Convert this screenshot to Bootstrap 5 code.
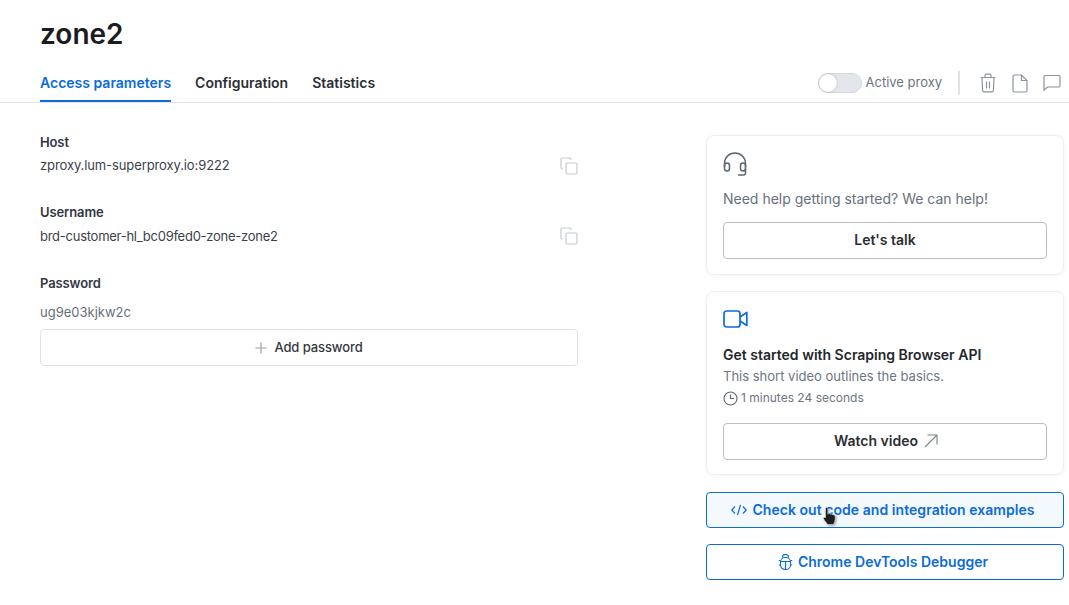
<!DOCTYPE html>
<html lang="en">
<head>
<meta charset="utf-8">
<title>zone2</title>
<link href="https://cdn.jsdelivr.net/npm/bootstrap@5.3.0/dist/css/bootstrap.min.css" rel="stylesheet">
<style>
html,body{height:605px;overflow:hidden}
body{font-family:Inter,"Liberation Sans",sans-serif;background:#fff;color:#24272b;font-size:14px}
.zhead{padding:14px 5px 0 40px}
.ztitle{font-size:28px;font-weight:600;line-height:40px;margin:0;color:#1a1c1f}
.ztabs{height:49px;border-bottom:1px solid #e1e4e8;padding:0 8px 0 40px}
.ztabbar{gap:24px}
.ztab{display:block;height:48px;line-height:58px;font-size:14px;font-weight:600;color:#2b2f35;text-decoration:none}
.ztab-on{color:#0b6bdc;border-bottom:2px solid #0b6bdc}
.ztools{height:40px;margin-top:9px}
.zswitch{width:44px;height:20px;border-radius:10px;background:#e3e6ea;border:1px solid #d5d9de;position:relative;margin-right:4px}
.zknob{position:absolute;left:0;top:0;width:18px;height:18px;border-radius:50%;background:#fff;box-shadow:0 0 2px rgba(0,0,0,.3)}
.zactive{font-size:13px;color:#6c7683;letter-spacing:-.02px}
.zsep{width:2px;height:24px;background:#dfe2e6;margin:0 19px 0 16px}
.zico{color:#8c949e;display:block}
.zico2{margin-left:15px}
.zico3{margin-left:15px}
.zmain{padding:0 5px 0 40px}
.zleft{width:538px;padding-top:31px}
.zright{width:358px;margin-left:128px;padding-top:32px}
.zlabel{font-size:13px;font-weight:600;line-height:16px;color:#33383f;letter-spacing:-.12px}
.zval{font-size:13px;line-height:20px;color:#3b414a}
.zfield1{height:70px}
.zfield2{height:71px}
.zfield1 .zval{margin-top:5px;letter-spacing:-.1px}
.zfield2 .zval{margin-top:6px;letter-spacing:-.26px}
.zcopy{color:#c5cad0;margin-top:7px}
.zpass{color:#67707c;margin-top:11px}
.zadd{width:100%;height:37px;margin-top:7px;background:#fff;border:1px solid #dfe2e6;border-radius:4px;font-size:13px;font-weight:500;color:#33383f;letter-spacing:-.1px;padding:0;display:flex;align-items:center;justify-content:center;gap:7px}
.zcard{background:#fff;border:1px solid #eceef1;border-radius:8px;box-shadow:0 1px 4px rgba(30,40,60,.05);padding:16px;margin-bottom:16px}
.zhelp{height:140px}
.zvideo{height:184px;padding-top:18px;margin-bottom:17px}
.zhelptext{font-size:14px;line-height:20px;margin-top:12px;color:#67707c}
.zbtn{width:100%;height:37px;background:#fff;border:1px solid #b9bec6;border-radius:4px;font-size:14px;font-weight:600;color:#2b2f35;padding:0 0 2px;display:flex;align-items:center;justify-content:center;gap:6px;margin-top:13px}
.zbtn2{margin-top:15px;padding-left:2px}
.zcardtitle{font-size:14px;font-weight:600;line-height:20px;color:#24272b;margin-top:17px}
.zsmall{font-size:13px;line-height:20px;color:#6c7683;margin-top:1px}
.zsmall2{font-size:12px;line-height:20px;color:#6c7683;margin-top:2px;gap:3px}
.zblue{width:100%;height:36px;background:#fff;border:1px solid #0b6bdc;border-radius:4px;font-size:14px;font-weight:600;color:#0b6bdc;padding:0 4px 1px 0;display:flex;align-items:center;justify-content:center;gap:5px;margin-bottom:16px}
.zhover{background:#f4f9fe;letter-spacing:.05px}
.zanchor{position:relative}
.zcursor{position:absolute;left:116px;top:15px;filter:drop-shadow(1px 1px 1px rgba(0,0,0,.35))}
</style>
</head>
<body>
<div class="zhead">
  <h1 class="ztitle">zone2</h1>
</div>
<div class="ztabs d-flex justify-content-between align-items-start">
  <nav class="d-flex ztabbar">
    <a class="ztab ztab-on" href="#">Access parameters</a>
    <a class="ztab" href="#">Configuration</a>
    <a class="ztab" href="#">Statistics</a>
  </nav>
  <div class="ztools d-flex align-items-center">
    <span class="zswitch"><span class="zknob"></span></span>
    <span class="zactive">Active proxy</span>
    <span class="zsep"></span>
    <svg class="zico" width="18" height="20" viewBox="0 0 18 20" fill="none" stroke="currentColor" stroke-width="1.2"><path d="M1.500 4.500h15M3 4.500l.6 13a1.500 1.500 0 0 0 1.500 1.400h7.800a1.500 1.500 0 0 0 1.500-1.400l.6-13M6 4.500V2.600A1.400 1.400 0 0 1 7.400 1.200h3.200A1.400 1.400 0 0 1 12 2.600v1.900M7.500 8.500v7M10.500 8.500v7"/></svg>
    <svg class="zico zico2" width="16" height="19" viewBox="0 0 16 19" fill="none" stroke="currentColor" stroke-width="1.2"><path d="M9.500 1H2.400A1.400 1.400 0 0 0 1 2.400v14.200A1.400 1.400 0 0 0 2.400 18h11.200a1.400 1.400 0 0 0 1.400-1.400V6.500zM9.500 1v5.500H15"/></svg>
    <svg class="zico zico3" width="18" height="18" viewBox="0 0 18 18" fill="none" stroke="currentColor" stroke-width="1.2"><path d="M2.400 1.500h13.200A1.400 1.400 0 0 1 17 2.900v8.700a1.400 1.400 0 0 1-1.400 1.400H4.500L1 16.200V2.900a1.400 1.400 0 0 1 1.400-1.400z"/></svg>
  </div>
</div>
<div class="zmain d-flex align-items-start">
  <section class="zleft">
    <div class="zfield1">
      <div class="zlabel">Host</div>
      <div class="d-flex justify-content-between align-items-start">
        <div class="zval">zproxy.lum-superproxy.io:9222</div>
        <svg class="zcopy" width="18" height="18" viewBox="0 0 18 18" fill="none" stroke="currentColor" stroke-width="1.2"><path d="M3 12H2.200A1.200 1.200 0 0 1 1 10.800V2.200A1.200 1.200 0 0 1 2.200 1h7.600A1.200 1.200 0 0 1 11 2.200V3"/><rect x="6" y="6" width="11" height="11" rx="1.500"/></svg>
      </div>
    </div>
    <div class="zfield2">
      <div class="zlabel">Username</div>
      <div class="d-flex justify-content-between align-items-start">
        <div class="zval">brd-customer-hl_bc09fed0-zone-zone2</div>
        <svg class="zcopy" width="18" height="18" viewBox="0 0 18 18" fill="none" stroke="currentColor" stroke-width="1.2"><path d="M3 12H2.200A1.200 1.200 0 0 1 1 10.800V2.200A1.200 1.200 0 0 1 2.200 1h7.600A1.200 1.200 0 0 1 11 2.200V3"/><rect x="6" y="6" width="11" height="11" rx="1.500"/></svg>
      </div>
    </div>
    <div>
      <div class="zlabel">Password</div>
      <div class="zval zpass">ug9e03kjkw2c</div>
      <button class="zadd" type="button">
        <svg width="12" height="12" viewBox="0 0 12 12" fill="none" stroke="#9aa1aa" stroke-width="1.200"><path d="M6 .5v11M.5 6h11"/></svg>
        Add password
      </button>
    </div>
  </section>
  <aside class="zright">
    <div class="zcard zhelp">
      <svg class="d-block" width="25" height="25" viewBox="0 0 25 25" fill="none" stroke="#5a6675" stroke-width="1.500" stroke-linecap="round"><path d="M1.500 15V11.500a10.500 10.500 0 0 1 21 0V15"/><rect x="1.500" y="11" width="5" height="8" rx="2.500"/><rect x="17.500" y="11" width="5" height="8" rx="2.500"/><path d="M22.500 17v4a2 2 0 0 1-2 2H15.500"/></svg>
      <div class="zhelptext">Need help getting started? We can help!</div>
      <button class="zbtn" type="button">Let's talk</button>
    </div>
    <div class="zcard zvideo">
      <svg class="d-block" width="25" height="18" viewBox="0 0 25 18" fill="none" stroke="#0b6bdc" stroke-width="1.700" stroke-linejoin="round"><rect x="1" y="1" width="16" height="16" rx="2.500"/><path d="M17 7L23.800 2.500v13L17 11"/></svg>
      <div class="zcardtitle">Get started with Scraping Browser API</div>
      <div class="zsmall">This short video outlines the basics.</div>
      <div class="zsmall2 d-flex align-items-center">
        <svg width="15" height="15" viewBox="0 0 15 15" fill="none" stroke="#5f6874" stroke-width="1.100"><circle cx="7.500" cy="7.500" r="6.500"/><path d="M7.500 3.500v4h3.500"/></svg>
        <span>1 minutes 24 seconds</span>
      </div>
      <button class="zbtn zbtn2" type="button">Watch video
        <svg width="14" height="14" viewBox="0 0 14 14" fill="none" stroke="#7d858f" stroke-width="1.100"><path d="M1 13L13 1M3.500 1H13v9.500"/></svg>
      </button>
    </div>
    <div class="zanchor">
      <button class="zblue zhover" type="button">
        <svg width="16" height="12" viewBox="0 0 16 12" fill="none" stroke="#0b6bdc" stroke-width="1.200"><path d="M4 2.500L.8 6 4 9.500M12 2.500L15.200 6 12 9.500M9.500 .8L6.500 11.200"/></svg>
        Check out code and integration examples
      </button>
      <svg class="zcursor" width="16" height="20" viewBox="0 0 16 20"><path d="M3.500 1.500c0-1.300 2.300-1.300 2.300 0V7c1-.6 2-.5 2.600.3.900-.5 1.900-.3 2.300.5.900-.4 2-.1 2.300.8.300 1 .3 3.700-.1 5.400-.3 1.400-1 2.500-1.500 3.500H5.700C5 16.500 2.800 14 1.500 11.800 1 10.800 2 9.800 3 10.500l.5.500z" fill="#1d1e20" stroke="#e8e8e8" stroke-width=".600"/></svg>
      <button class="zblue" type="button">
        <svg width="15" height="16" viewBox="0 0 15 16" fill="none" stroke="#0b6bdc" stroke-width="1.100"><path d="M4.500 3.500V3a3 2.500 0 0 1 6 0v.5"/><rect x="2.500" y="3.500" width="10" height="12" rx="4.500"/><path d="M7.500 7.500v8M2.500 7.500h10M2.500 6.500H.8M12.500 6.500h1.700M2.500 11H.8M12.500 11h1.700"/></svg>
        Chrome DevTools Debugger
      </button>
    </div>
  </aside>
</div>
<script src="https://cdn.jsdelivr.net/npm/bootstrap@5.3.0/dist/js/bootstrap.bundle.min.js"></script>
</body>
</html>
